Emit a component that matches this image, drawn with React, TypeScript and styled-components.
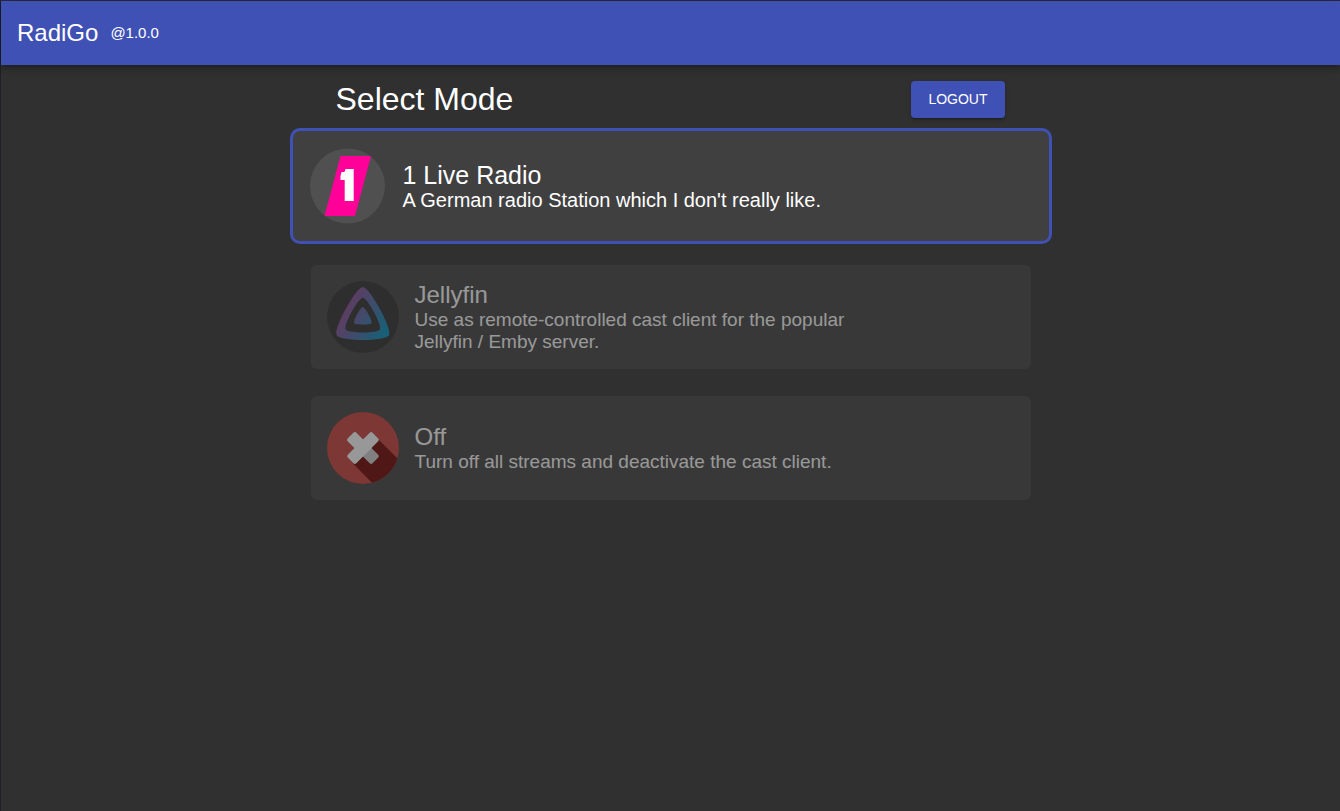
import React, { useState } from "react";
import styled, { createGlobalStyle, css } from "styled-components";

const GlobalStyle = createGlobalStyle`
  *, *::before, *::after { box-sizing: border-box; }
  body {
    margin: 0;
    background: #303030;
    color: #fff;
    font-family: "Liberation Sans", Arial, sans-serif;
  }
`;

const Page = styled.div`
  min-height: 100vh;
  border-top: 1px solid #292b38;
  border-left: 1px solid #1f2127;
`;

const AppBar = styled.header`
  display: flex;
  align-items: center;
  gap: 12px;
  height: 64px;
  padding: 0 16px;
  background: #3f51b5;
  box-shadow: 0 2px 4px -1px rgba(0, 0, 0, 0.2), 0 4px 5px rgba(0, 0, 0, 0.14),
    0 1px 10px rgba(0, 0, 0, 0.12);
`;

const Brand = styled.span`
  font-size: 24px;
  line-height: 32px;
`;

const Version = styled.span`
  font-size: 15px;
  line-height: 20px;
`;

const Content = styled.main`
  width: 100%;
  max-width: 762px;
  margin: 0 auto;
  padding-top: 16px;
`;

const TitleRow = styled.div`
  display: flex;
  align-items: flex-start;
  justify-content: space-between;
  padding: 0 47px 0 46px;
  margin-bottom: 10px;
`;

const Title = styled.h1`
  margin: 0;
  font-size: 32px;
  font-weight: 400;
  line-height: 36px;
`;

const LogoutButton = styled.button`
  height: 37px;
  padding: 0 17px 2px;
  border: 0;
  border-radius: 4px;
  background: #3f51b5;
  color: #fff;
  font: inherit;
  font-size: 14px;
  cursor: pointer;
  box-shadow: 0 3px 1px -2px rgba(0, 0, 0, 0.2), 0 2px 2px rgba(0, 0, 0, 0.14),
    0 1px 5px rgba(0, 0, 0, 0.12);
`;

const ModeList = styled.div`
  display: flex;
  flex-direction: column;
`;

const ModeName = styled.span`
  font-size: 24px;
  line-height: 28px;
`;

const ModeText = styled.span`
  font-size: 19px;
  line-height: 22px;
`;

const Labels = styled.span`
  display: flex;
  flex-direction: column;
  max-width: 450px;
`;

const Logo = styled.svg`
  flex: none;
  width: 72px;
  height: 72px;
`;

const ModeCard = styled.button<{ $active: boolean }>`
  display: flex;
  align-items: center;
  gap: 16px;
  min-height: 104px;
  margin: 0 21px 27px;
  padding: 16px;
  border: 0;
  border-radius: 6px;
  background: #404040;
  color: #fff;
  font: inherit;
  text-align: left;
  cursor: pointer;
  opacity: 0.5;

  ${({ $active }) =>
    $active &&
    css`
      gap: 17px;
      min-height: 116px;
      margin: 0 0 21px;
      padding: 16px 17px;
      border: 3px solid #3f51b5;
      border-radius: 10px;
      opacity: 1;

      ${Logo} {
        width: 76px;
        height: 76px;
      }
      ${ModeName} {
        font-size: 25px;
      }
      ${ModeText} {
        font-size: 20px;
      }
    `}
`;

const LiveLogo = () => (
  <Logo viewBox="0 0 76 76" aria-hidden="true">
    <circle cx="37.5" cy="38" r="37.5" fill="#505050" />
    <path d="M30.5 8H61L45 68H14.5Z" fill="#ff0098" />
    <path d="M35.5 21H43.700V53H34.700V32H30.500V28L31.500 24H34.500Z" fill="#fff" />
  </Logo>
);

const JellyfinLogo = () => (
  <Logo viewBox="0 0 72 72" aria-hidden="true">
    <defs>
      <linearGradient id="jelly" gradientUnits="userSpaceOnUse" x1="18" y1="29" x2="58" y2="52">
        <stop offset="0" stopColor="#8a4a95" />
        <stop offset="1" stopColor="#0090bd" />
      </linearGradient>
    </defs>
    <circle cx="36" cy="36" r="36" fill="#2d2d2d" />
    <path
      d="M35.8 26C33.6 26 26 39.800 27.100 42C28.200 44.200 43.500 44.200 44.600 42C45.700 39.800 38 26 35.800 26Z"
      fill="url(#jelly)"
    />
    <path
      fillRule="evenodd"
      d="M35.800 6C29.100 6 6.300 47.400 9.600 54C12.900 60.700 58.800 60.600 62.100 54C65.400 47.400 42.500 6 35.800 6ZM53 48.200C50.900 52.500 20.800 52.600 18.600 48.200C16.400 43.900 31.400 16.800 35.800 16.800C40.200 16.800 55.200 43.900 53 48.200Z"
      fill="url(#jelly)"
    />
  </Logo>
);

const OffLogo = () => (
  <Logo viewBox="0 0 72 72" aria-hidden="true">
    <defs>
      <clipPath id="offDisc">
        <circle cx="36" cy="36" r="36" />
      </clipPath>
    </defs>
    <circle cx="36" cy="36" r="36" fill="#c93e38" />
    <path d="M51.5 27.500L86 62L62 88L26 51.500L36 36Z" fill="#700000" clipPath="url(#offDisc)" />
    <g transform="rotate(45 36 36)">
      <rect x="18.500" y="30" width="35" height="12" rx="2" fill="#d0d0d0" />
      <rect x="30" y="18.500" width="12" height="35" rx="2" fill="#fff" />
      <path d="M18.500 32Q18.500 30 20.500 30H42V42H20.500Q18.500 42 18.500 40Z" fill="#fff" />
    </g>
  </Logo>
);

const modes = [
  {
    id: "live",
    name: "1 Live Radio",
    text: "A German radio Station which I don't really like.",
    Icon: LiveLogo,
  },
  {
    id: "jellyfin",
    name: "Jellyfin",
    text: "Use as remote-controlled cast client for the popular Jellyfin / Emby server.",
    Icon: JellyfinLogo,
  },
  {
    id: "off",
    name: "Off",
    text: "Turn off all streams and deactivate the cast client.",
    Icon: OffLogo,
  },
];

export default function App() {
  const [active, setActive] = useState("live");

  return (
    <Page>
      <GlobalStyle />
      <AppBar>
        <Brand>RadiGo</Brand>
        <Version>@1.0.0</Version>
      </AppBar>
      <Content>
        <TitleRow>
          <Title>Select Mode</Title>
          <LogoutButton type="button">LOGOUT</LogoutButton>
        </TitleRow>
        <ModeList>
          {modes.map(({ id, name, text, Icon }) => (
            <ModeCard
              key={id}
              type="button"
              $active={id === active}
              aria-pressed={id === active}
              onClick={() => setActive(id)}
            >
              <Icon />
              <Labels>
                <ModeName>{name}</ModeName>
                <ModeText>{text}</ModeText>
              </Labels>
            </ModeCard>
          ))}
        </ModeList>
      </Content>
    </Page>
  );
}
